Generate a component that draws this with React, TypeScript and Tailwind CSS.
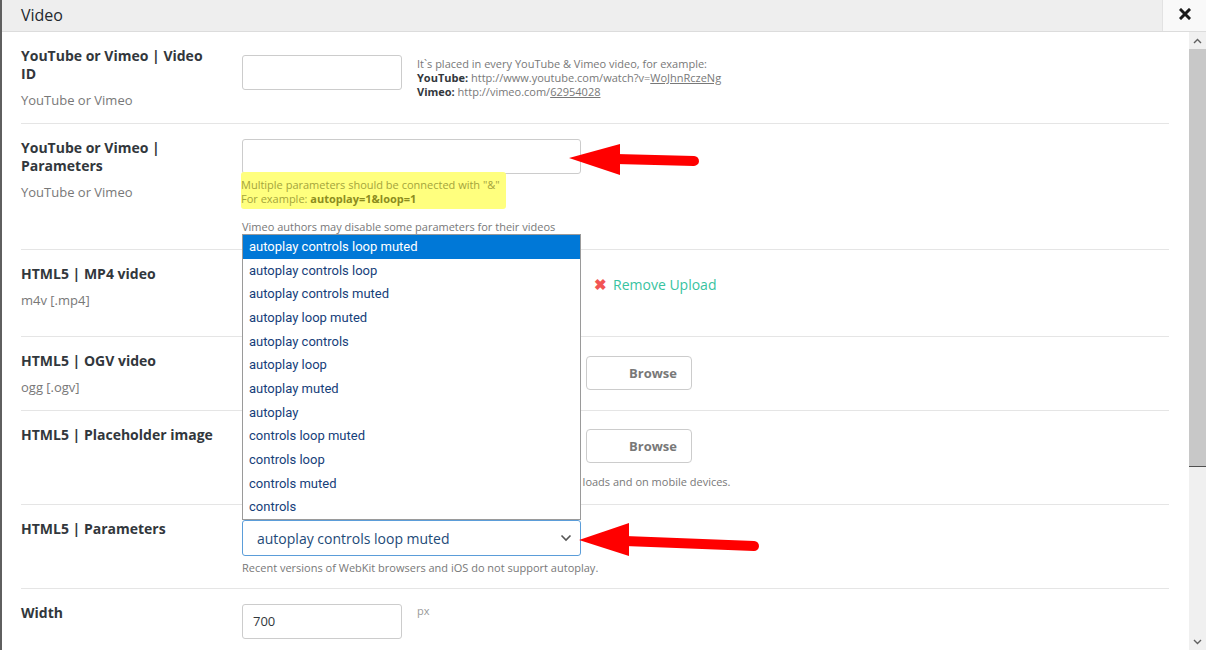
import React from 'react';

const paramOptions = [
  'autoplay controls loop muted',
  'autoplay controls loop',
  'autoplay controls muted',
  'autoplay loop muted',
  'autoplay controls',
  'autoplay loop',
  'autoplay muted',
  'autoplay',
  'controls loop muted',
  'controls loop',
  'controls muted',
  'controls',
];

interface RowProps {
  label: string;
  sub?: string;
  height: string;
  children?: React.ReactNode;
}

const Row: React.FC<RowProps> = ({ label, sub, height, children }) => (
  <div className={`flex border-b border-[#e5e5e5] pt-[15px] ${height}`}>
    <div className="w-[221px] shrink-0">
      <div className="w-[196px] text-[14px] font-bold leading-[18px] text-[#32373c]">{label}</div>
      {sub && <div className="mt-2 text-[13px] leading-[18px] text-[#787878]">{sub}</div>}
    </div>
    <div className="flex-1">{children}</div>
  </div>
);

const TextInput: React.FC<{ w: string; value?: string }> = ({ w, value }) => (
  <div className={`${w} h-[35px] rounded-[3px] border border-[#cccccc] bg-white pl-[10px] text-[13px] leading-[33px] text-[#32373c]`}>
    {value}
  </div>
);

const BrowseButton = () => (
  <div className="h-[34px] w-[106px] rounded-[4px] border border-[#cccccc] bg-white pl-[42px] text-[13px] font-bold leading-[32px] text-[#787878]">
    Browse
  </div>
);

const RedArrow: React.FC<{ tipX: number; tipY: number; backX: number; top: number; bottom: number; endX: number; endY: number; shaftY: number }> = ({
  tipX,
  tipY,
  backX,
  top,
  bottom,
  endX,
  endY,
  shaftY,
}) => (
  <svg className="pointer-events-none absolute left-0 top-0" width="1206" height="650">
    <line x1={backX - 4} y1={shaftY} x2={endX} y2={endY} stroke="#ff0000" strokeWidth="10" strokeLinecap="round" />
    <polygon points={`${tipX},${tipY} ${backX},${top} ${backX},${bottom}`} fill="#ff0000" />
  </svg>
);

export default function App() {
  return (
    <div className="relative flex h-[650px] w-[1206px] flex-col overflow-hidden border-l-2 border-[#5f5f5f] bg-white font-['Open_Sans',sans-serif]">
      {/* Header */}
      <div className="flex h-[32px] shrink-0 border-b border-[#dcdcdc] bg-[#eeeeee]">
        <div className="flex-1 pl-[19px] text-[16px] leading-[30px] text-[#23282d]">Video</div>
        <div className="flex w-[44px] items-center justify-center border-l border-[#e2e2e2] bg-[#f9f9f9]">
          <svg width="12" height="12" viewBox="0 0 12 12" className="-mt-[3px]">
            <path d="M2 2 L10 10 M10 2 L2 10" stroke="#1a1a1a" strokeWidth="3" strokeLinecap="square" />
          </svg>
        </div>
      </div>

      <div className="flex min-h-0 flex-1">
        {/* Content */}
        <div className="relative flex-1 overflow-hidden pl-[19px] pr-[20px]">
          <Row label="YouTube or Vimeo | Video ID" sub="YouTube or Vimeo" height="h-[92px]">
            <div className="mt-[8px] flex">
              <TextInput w="w-[160px]" />
              <div className="ml-[15px] mt-[2px] text-[11px] leading-[14px] text-[#787878]">
                <div>It`s placed in every YouTube &amp; Vimeo video, for example:</div>
                <div>
                  <span className="font-bold text-[#32373c]">YouTube:</span> http://www.youtube.com/watch?v=
                  <span className="underline">WoJhnRczeNg</span>
                </div>
                <div>
                  <span className="font-bold text-[#32373c]">Vimeo:</span> http://vimeo.com/<span className="underline">62954028</span>
                </div>
              </div>
            </div>
          </Row>

          <Row label="YouTube or Vimeo | Parameters" sub="YouTube or Vimeo" height="h-[126px]">
            <TextInput w="w-[339px]" />
            <div className="-ml-px -mt-[2px] w-[265px] rounded-[3px] bg-[#ffff7e] pb-[3px] pt-[6px] text-[11px] leading-[14px] text-[#a4a43c]">
              <div>Multiple parameters should be connected with "&amp;"</div>
              <div>
                For example: <span className="font-bold text-[#8c8c1e]">autoplay=1&amp;loop=1</span>
              </div>
            </div>
            <div className="mt-[11px] text-[11px] leading-[14px] text-[#787878]">
              Vimeo authors may disable some parameters for their videos
            </div>
          </Row>

          <Row label="HTML5 | MP4 video" sub="m4v [.mp4]" height="h-[87px]">
            <div className="mt-[2px] flex items-center">
              <TextInput w="w-[338px]" />
              <span className="ml-[14px] text-[15px] font-bold leading-none text-[#f25454]">✖</span>
              <span className="ml-[6px] text-[14px] text-[#38c3a0]">Remove Upload</span>
            </div>
          </Row>

          <Row label="HTML5 | OGV video" sub="ogg [.ogv]" height="h-[74px]">
            <div className="mt-[3px] flex items-center gap-[16px]">
              <TextInput w="w-[328px]" />
              <BrowseButton />
            </div>
          </Row>

          <Row label="HTML5 | Placeholder image" height="h-[94px]">
            <div className="mt-[2px] flex items-center gap-[16px]">
              <TextInput w="w-[328px]" />
              <BrowseButton />
            </div>
            <div className="mt-[12px] text-[11px] leading-[14px] text-[#787878]">
              Image is shown as a poster before the video plays, while the video loads and on mobile devices.
            </div>
          </Row>

          <Row label="HTML5 | Parameters" height="h-[84px]">
            <div className="flex h-[36px] w-[339px] items-center justify-between rounded-[3px] border border-[#5b9dd9] pl-[14px] pr-[8px] text-[14px] text-[#1d4a78]">
              <span>autoplay controls loop muted</span>
              <svg width="12" height="8" viewBox="0 0 12 8">
                <path d="M1.5 1.5 L6 6 L10.5 1.5" fill="none" stroke="#555555" strokeWidth="1.6" />
              </svg>
            </div>
            <div className="mt-[5px] text-[11px] leading-[14px] text-[#787878]">
              Recent versions of WebKit browsers and iOS do not support autoplay.
            </div>
          </Row>

          <Row label="Width" height="h-[70px]">
            <div className="flex">
              <TextInput w="w-[160px]" value="700" />
              <span className="ml-[15px] text-[11px] leading-[14px] text-[#9a9a9a]">px</span>
            </div>
          </Row>

          {/* Open dropdown list */}
          <div className="absolute left-[240px] top-[202px] flex h-[286px] w-[339px] flex-col border border-[#9a9a9a] bg-white font-['Roboto',sans-serif] text-[13px]">
            {paramOptions.map((opt, i) => (
              <div
                key={opt}
                className={`flex flex-1 items-center pl-[6px] ${i === 0 ? 'bg-[#0078d7] text-white' : 'text-[#16407a]'}`}
              >
                {opt}
              </div>
            ))}
          </div>
        </div>

        {/* Scrollbar */}
        <div className="flex w-[17px] shrink-0 flex-col bg-[#f0f0f0]">
          <div className="flex h-[17px] items-center justify-center">
            <svg width="9" height="6" viewBox="0 0 9 6">
              <path d="M1 5 L4.5 1.5 L8 5" fill="none" stroke="#606060" strokeWidth="1.4" />
            </svg>
          </div>
          <div className="h-[418px] border-b border-[#505050] bg-[#c8c8c8]" />
          <div className="flex-1" />
          <div className="flex h-[17px] items-center justify-center">
            <svg width="9" height="6" viewBox="0 0 9 6">
              <path d="M1 1 L4.5 4.5 L8 1" fill="none" stroke="#606060" strokeWidth="1.4" />
            </svg>
          </div>
        </div>
      </div>

      {/* Annotation arrows */}
      <RedArrow tipX={567} tipY={158} backX={618} top={144} bottom={175} endX={692} endY={161} shaftY={159} />
      <RedArrow tipX={577} tipY={540} backX={627} top={523} bottom={556} endX={752} endY={546} shaftY={541} />
    </div>
  );
}
